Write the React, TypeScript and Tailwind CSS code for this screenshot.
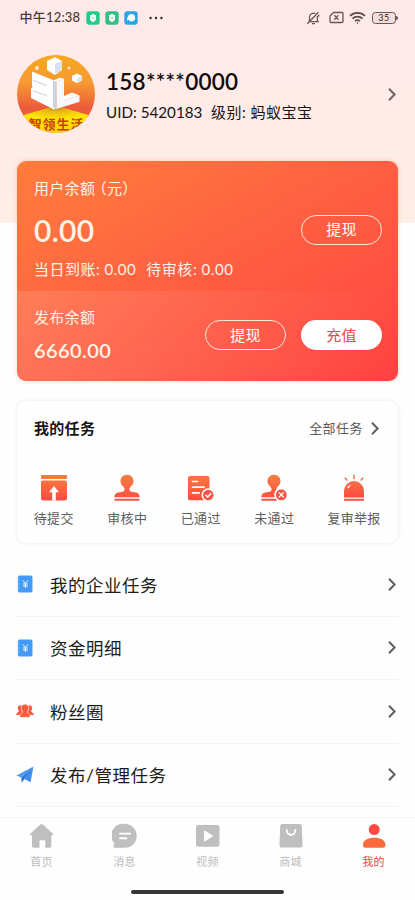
import React from "react";

type IconProps = { className?: string };

const Chevron = ({ className = "" }: IconProps) => (
  <svg viewBox="0 0 8 13" className={`h-[13px] w-2 shrink-0 ${className}`} fill="none" stroke="currentColor" strokeWidth="2">
    <path d="M1 .8 6.6 6.5 1 12.2" />
  </svg>
);

const SubmitIcon = () => (
  <svg viewBox="0 0 28 28" className="size-7">
    <rect x="1" y="1" width="26" height="4" rx="1" fill="#ee7d40" />
    <linearGradient id="sub" x1="0" y1="0" x2="0" y2="1">
      <stop stopColor="#f9733e" />
      <stop offset="1" stopColor="#fc4b43" />
    </linearGradient>
    <path d="M3 6.500h22a2 2 0 0 1 2 2V24a2.500 2.500 0 0 1-2.500 2.500h-21A2.500 2.500 0 0 1 1 24V8.500a2 2 0 0 1 2-2Z" fill="url(#sub)" />
    <path d="m14 12 5 6.300h-3.200v8.200h-3.600v-8.200H9Z" fill="#fff" />
  </svg>
);

const stampBody =
  "M14 .8c-4 0-6.500 2.900-6.500 6.400 0 3.300 2.500 4.800 3.500 6.200.9 1.400.7 3-.4 3.800-1 .8-3.400.8-5.600 1.300-2.200.5-3.700 2.100-3.700 4.700h25.400c0-2.600-1.500-4.200-3.700-4.700-2.200-.5-4.600-.5-5.600-1.300-1.100-.8-1.300-2.400-.4-3.800 1-1.400 3.500-2.900 3.500-6.200C20.500 3.700 18 .8 14 .8Z";

const StampIcon = () => (
  <svg viewBox="0 0 28 28" className="size-7">
    <linearGradient id="stamp" gradientUnits="userSpaceOnUse" x1="0" y1="0" x2="0" y2="27">
      <stop stopColor="#f4813f" />
      <stop offset="1" stopColor="#fc4b43" />
    </linearGradient>
    <path d={stampBody} fill="url(#stamp)" />
    <rect x="1.500" y="24.800" width="25" height="1.900" rx=".6" fill="#f45045" />
  </svg>
);

const PassedIcon = () => (
  <svg viewBox="0 0 28 28" className="size-7">
    <linearGradient id="pass" gradientUnits="userSpaceOnUse" x1="0" y1="0" x2="0" y2="27">
      <stop stopColor="#fa793d" />
      <stop offset="1" stopColor="#fc4b43" />
    </linearGradient>
    <rect x="1" y="2" width="21.500" height="24.200" rx="1.800" fill="url(#pass)" />
    <path d="M4.800 7.500h6.600M4.800 13.200h12.800M4.800 18.800h8" stroke="#fff" strokeWidth="1.700" />
    <circle cx="21.300" cy="21" r="6.800" fill="#fff" />
    <circle cx="21.300" cy="21" r="5.300" fill="#f4574a" />
    <path d="m18.500 21 2.200 2 3.600-3.700" stroke="#fff" strokeWidth="1.500" fill="none" />
  </svg>
);

const RejectedIcon = () => (
  <svg viewBox="0 0 28 28" className="size-7">
    <path d={stampBody} fill="url(#stamp)" />
    <rect x="1.300" y="24.800" width="16" height="1.900" rx=".6" fill="#f45045" />
    <circle cx="21.300" cy="20.800" r="7.100" fill="#fefefe" />
    <circle cx="21.300" cy="20.800" r="5.500" fill="#f4574a" />
    <path d="m18.900 18.400 4.800 4.800m0-4.800-4.800 4.800" stroke="#fff" strokeWidth="1.300" />
  </svg>
);

const AlarmIcon = () => (
  <svg viewBox="0 0 28 28" className="size-7">
    <linearGradient id="alarm" x1="0" y1="0" x2="0" y2="1">
      <stop stopColor="#fa6f40" />
      <stop offset="1" stopColor="#fc4b43" />
    </linearGradient>
    <path d="M4 23.500V17a10 10 0 0 1 20 0v6.500Z" fill="url(#alarm)" />
    <rect x="4" y="24.700" width="20" height="2" rx=".5" fill="#f4524a" />
    <path d="M14 .8v4.400M4.800 3.800l2.500 2.700M23.200 3.800l-2.500 2.700" stroke="#f07448" strokeWidth="1.500" />
    <path d="M8 13.600c.4-.9.900-1.400 1.700-1.800" stroke="#fff" strokeWidth="1.500" fill="none" strokeLinecap="round" />
  </svg>
);

const LedgerIcon = () => (
  <svg viewBox="0 0 18 18" className="size-[18px]">
    <rect x="1.900" y=".6" width="14.600" height="17" rx="1.800" fill="#429bf8" />
    <path d="M1 5h2.200M1 9h2.200M1 13h2.200" stroke="#b7dcff" strokeWidth="1" />
    <path d="m6.900 5.500 2.500 3 2.500-3M9.400 8.500v4.600M6.900 9h5M6.900 11h5" stroke="#f2f9ff" strokeWidth="1" fill="none" />
  </svg>
);

const FansIcon = () => (
  <svg viewBox="0 0 18 18" className="size-[18px]" fill="#fb5a3d">
    <path d="M4.600 3.200c-2 0-3 1.500-2.800 3.200.1 1.100.6 1.900 1.200 2.500-.1 1.200-2.400 1.500-2.800 3.200-.1.600.3 1 .9 1h3.100c.5-1.300 1.600-2 2.500-2.500C5 8.700 4.400 5.500 5.900 3.500Z" />
    <path d="M13.400 3.200c2 0 3 1.500 2.800 3.200-.1 1.100-.6 1.900-1.200 2.500.1 1.200 2.400 1.500 2.800 3.200.1.600-.3 1-.9 1h-3.100c-.5-1.300-1.600-2-2.500-2.500 1.700-1.900 2.300-5.100.8-7.100Z" />
    <path d="M9 2.300c-2.400 0-3.900 1.700-3.700 4.100.1 1.500.7 2.600 1.500 3.400.3 1.200-2.500 1.600-2.900 3.700-.2 1 .4 1.800 1.300 1.800h7.600c.9 0 1.500-.8 1.300-1.800-.4-2.100-3.200-2.500-2.900-3.700.8-.8 1.400-1.900 1.500-3.400.2-2.400-1.300-4.100-3.700-4.100Z" stroke="#fff" strokeWidth=".4" />
  </svg>
);

const PlaneIcon = () => (
  <svg viewBox="0 0 18 18" className="size-[18px]">
    <path d="M17.400.6.4 9.500l4.900 2Z" fill="#4b9bf0" />
    <path d="M17.400.6 5.300 11.500l.4 5.300 2.600-3.500Z" fill="#2f73cf" />
    <path d="M17.400.6 7.300 12.400l7.300 3.900Z" fill="#408df0" />
  </svg>
);

const HomeIcon = () => (
  <svg viewBox="0 0 26 26" className="size-[26px]" fill="#bfbfbf">
    <path d="M11.400 1.400a2 2 0 0 1 2.500 0l9.900 9c.8.700.3 1.900-.7 1.900h-.8V23c0 1-.7 1.700-1.700 1.700h-4.300v-6c0-.9-.5-1.400-1.400-1.400h-3c-.9 0-1.400.5-1.400 1.400v6H4.700c-1 0-1.700-.7-1.700-1.700V12.300h-.8c-1 0-1.500-1.200-.7-1.900Z" />
  </svg>
);

const MessageIcon = () => (
  <svg viewBox="0 0 26 26" className="size-[26px]">
    <path d="M13 1a11.700 11.700 0 0 1 11.700 11.800A11.700 11.700 0 0 1 13 24.700H2.600c-.9 0-1.300-.6-1-1.400l.7-3A11.700 11.700 0 0 1 13 1Z" fill="#bfbfbf" />
    <path d="M8 10.600h10.200M8 15.300h6.300" stroke="#fff" strokeWidth="1.900" strokeLinecap="round" />
  </svg>
);

const VideoIcon = () => (
  <svg viewBox="0 0 26 26" className="size-[26px]">
    <rect x="1" y="2" width="23.500" height="21.700" rx="2.600" fill="#bfbfbf" />
    <path d="M9.500 7.800v10.400l8.300-5.200Z" fill="#fff" stroke="#fff" strokeWidth=".8" strokeLinejoin="round" />
  </svg>
);

const ShopIcon = () => (
  <svg viewBox="0 0 26 26" className="size-[26px]">
    <path d="M4.600 1h16.800c1.300 0 2.300.9 2.400 2.200l.7 18.800c.1 1.500-.9 2.600-2.400 2.600H3.900c-1.500 0-2.500-1.100-2.400-2.600l.7-18.800C2.300 1.900 3.300 1 4.600 1Z" fill="#bfbfbf" />
    <path d="M8.700 7c0 2.700 1.700 4.800 4.300 4.800s4.300-2.100 4.300-4.800" stroke="#fff" strokeWidth="1.900" strokeLinecap="round" fill="none" />
  </svg>
);

const MeIcon = () => (
  <svg viewBox="0 0 26 26" className="size-[26px]">
    <circle cx="13.200" cy="6.600" r="5.500" fill="#fb4b44" />
    <path d="M13.200 14.700c6.300 0 11.200 2.300 11.200 7 0 2-.7 3-2.300 3H4.300c-1.600 0-2.300-1-2.300-3 0-4.700 4.900-7 11.200-7Z" fill="#fd6b3d" />
  </svg>
);

const StatusBar = () => (
  <div className="flex h-[35px] items-center pl-[19.500px] pr-[17px] text-[#493b3b]">
    <span className="w-[61px] whitespace-nowrap text-[13px] font-medium tracking-[0.2px]">中午12:38</span>
    <div className="ml-[5.500px] flex gap-[5px]">
      {["#23ca8b", "#35bf88"].map((c) => (
        <svg key={c} viewBox="0 0 14 14" className="size-[14px]">
          <rect x=".3" y=".3" width="13.400" height="13.400" rx="3" fill={c} />
          <path d="M7 3 10 4.200v3c0 2-1.300 3.200-3 4-1.700-.8-3-2-3-4v-3Z" fill="#fff" />
          <path d="m6 6.500 1 1.100 1-1.300" stroke={c} fill="none" />
        </svg>
      ))}
      <svg viewBox="0 0 14 14" className="size-[14px]">
        <rect x=".3" y=".3" width="13.400" height="13.400" rx="3" fill="#2aa4e4" />
        <path d="M7.600 3a3.700 3.700 0 1 1-3.500 5.300L3.500 10.500C2.500 6.500 4.500 3 7.600 3Z" fill="#fff" />
      </svg>
    </div>
    <svg viewBox="0 0 14 4" className="ml-[11px] h-1 w-[14px]" fill="#342929">
      <circle cx="1.600" cy="2" r="1.200" /><circle cx="7" cy="2" r="1.200" /><circle cx="12.400" cy="2" r="1.200" />
    </svg>
    <div className="ml-auto flex items-center">
      <svg viewBox="0 0 15 14" className="h-[14px] w-[15px]" fill="none" stroke="#685656" strokeWidth="1.300">
        <path d="M3.500 10.500V6.200A3.900 3.900 0 0 1 9.300 2.700M11.400 5v5.500M2.400 10.700h10.500M6 12.700h3M1.300 12.700 12.500 1.200M12 4.500l1.500.4" />
      </svg>
      <svg viewBox="0 0 15 13" className="ml-[8px] h-[13px] w-[15px]" fill="none" stroke="#685656" strokeWidth="1.300">
        <path d="M4.500 1.500H13q1 0 1 1v8q0 1-1 1H2q-1 0-1-1V5ZM5.300 4.300l4.200 4.400M9.500 4.300 5.300 8.700" />
      </svg>
      <svg viewBox="0 0 17 14" className="ml-[5px] h-[14px] w-[17px]" fill="none" stroke="#5d4b4b" strokeWidth="1.700">
        <path d="M1 5a10.800 10.800 0 0 1 15 0M3.500 7.600a7.200 7.200 0 0 1 10 0M6 10.200a3.700 3.700 0 0 1 5 0" />
        <circle cx="8.500" cy="12" r=".8" fill="#5d4b4b" stroke="none" />
      </svg>
      <div className="ml-[6px] flex h-[12px] w-[24px] items-center justify-center rounded-[3.500px] border-[1.500px] border-[#685656] bg-[#f4dedd] text-[9px] font-medium leading-none tracking-[0.5px]">35</div>
      <div className="h-1 w-[2px] rounded-r bg-[#685656]" />
    </div>
  </div>
);

const Avatar = () => (
  <svg viewBox="0 0 78 78" className="size-[78px] shrink-0">
    <defs>
      <linearGradient id="sky" x1="0" y1="0" x2="0" y2="1">
        <stop stopColor="#f6a720" /><stop offset=".35" stopColor="#f79a32" /><stop offset=".68" stopColor="#ec5b3a" />
      </linearGradient>
      <radialGradient id="floor" cx=".5" cy="0" r=".8">
        <stop stopColor="#b37a1c" /><stop offset=".22" stopColor="#e9b817" /><stop offset=".6" stopColor="#ffe800" /><stop offset="1" stopColor="#fdd80a" />
      </radialGradient>
      <clipPath id="disc"><circle cx="39" cy="39" r="39" /></clipPath>
    </defs>
    <g clipPath="url(#disc)">
      <rect width="78" height="78" fill="url(#sky)" />
      <path d="M0 62 34 52h10l34 10v16H0Z" fill="url(#floor)" />
      <path d="m30 6 8-4 7 4v9l-7 5-8-5Z" fill="#fff" /><path d="m38 9 7-3v9l-7 5Z" fill="#dce2e8" />
      <path d="m55 21 5-2.500 5 2.500v4.500L60 28l-5-2.500Z" fill="#fff" /><path d="m60 23 5-2v4.500L60 28Z" fill="#dde4ee" />
      <circle cx="20" cy="13" r="2" fill="#ffe5c5" /><circle cx="52" cy="13" r="1.500" fill="#ffe5c5" />
      <path d="m15 16.500 21 8.500 2 2v28L14 43V33l2-1-1-1Z" fill="#fff" />
      <path d="m36 25.500 3.500 1V54l-3.500-1.500Z" fill="#cbd5e1" />
      <path d="m39.500 26.500 7.500-2.700v21.700l15.500-5v6.200L39.500 54Z" fill="#f6f8fc" />
      <path d="m36 25.500 7-2.700 4 1-7.500 2.700ZM47 41l8-3.500 7.500 3-15.500 5Z" fill="#fff" />
      <path d="m16 24.500 14 5.500v1.600l-14-5.500ZM16 35l14 5v1.600l-14-5Z" fill="#d7dde4" />
      <text x="39.500" y="74" textAnchor="middle" fontSize="13" fontWeight="700" letterSpacing=".9" fill="#c8400f">智领生活</text>
    </g>
  </svg>
);

const Pill = ({ children, solid = false }: { children: string; solid?: boolean }) => (
  <button className={`flex h-[30px] w-[81px] items-center justify-center rounded-full text-[15px] tracking-[0.3px] ${solid ? "bg-white text-[#e94b45]" : "border-[1.500px] border-[#ffe7dc] text-white"}`}>
    {children}
  </button>
);

const tasks = [
  { label: "待提交", icon: <SubmitIcon /> },
  { label: "审核中", icon: <StampIcon /> },
  { label: "已通过", icon: <PassedIcon /> },
  { label: "未通过", icon: <RejectedIcon /> },
  { label: "复审举报", icon: <AlarmIcon /> },
];

const menu = [
  { label: "我的企业任务", icon: <LedgerIcon /> },
  { label: "资金明细", icon: <LedgerIcon /> },
  { label: "粉丝圈", icon: <FansIcon /> },
  { label: "发布/管理任务", icon: <PlaneIcon /> },
];

const tabs = [
  { label: "首页", icon: <HomeIcon /> },
  { label: "消息", icon: <MessageIcon /> },
  { label: "视频", icon: <VideoIcon /> },
  { label: "商城", icon: <ShopIcon /> },
  { label: "我的", icon: <MeIcon />, active: true },
];

export default function App() {
  return (
    <div className="flex h-[900px] w-[415px] flex-col overflow-hidden bg-[#fefefe] font-['Lato','Noto_Sans_CJK_SC',sans-serif]">
      <div className="h-[223px] shrink-0 bg-linear-to-b from-[#ffe9e9] to-[#feeee6]">
        <StatusBar />
        <header className="mt-5 flex h-[78px] items-center pl-[17px] pr-[19px]">
          <Avatar />
          <div className="ml-[11px] whitespace-nowrap pt-[3px] text-[#1b1212]">
            <p className="h-[30px] text-[22.500px] font-semibold leading-[30px] tracking-[0.25px] text-[#120b0b]">158****0000</p>
            <div className="mt-[3px] flex h-6 items-center text-[15px]">
              <span className="w-[105px] text-[15.200px]">UID: 5420183</span>
              <span className="tracking-[0.500px]">级别: 蚂蚁宝宝</span>
            </div>
          </div>
          <Chevron className="ml-auto text-[#74605f]" />
        </header>
      </div>

      <section className="mx-[17px] -mt-[62px] h-[220px] shrink-0 overflow-hidden rounded-[9px] bg-linear-to-br from-[#ff7d3c] via-[#ff5f42] to-[#ff4141] text-[15px] text-[#fff3e8] shadow-[0_0_4px_rgba(255,80,60,0.3)]">
        <div className="flex h-[130px] items-start justify-between pl-[17px] pr-4 pt-4">
          <div>
            <p className="flex h-[22px] gap-1 whitespace-nowrap leading-[22px] tracking-[0.3px]">
              <span>用户余额</span>
              <span className="[font-feature-settings:'halt']">（元）</span>
            </p>
            <p className="mt-[13px] h-9 text-[30px] font-semibold leading-9 tracking-[0.3px]">0.00</p>
            <p className="mt-[10px] flex h-[22px] gap-[10px] whitespace-nowrap leading-[22px]">
              <span className="tracking-[0.5px]">当日到账: 0.00</span><span className="tracking-[0.550px]">待审核: 0.00</span>
            </p>
          </div>
          <div className="pt-[37.500px]"><Pill>提现</Pill></div>
        </div>
        <div className="flex h-[90px] items-start justify-between bg-linear-to-r from-white/12 to-white/0 pl-[17px] pr-4 pt-[15px]">
          <div>
            <p className="h-[22px] leading-[22px] tracking-[0.3px]">发布余额</p>
            <p className="mt-[10px] h-6 text-[20px] font-semibold leading-6 tracking-[0.4px]">6660.00</p>
          </div>
          <div className="flex gap-[15px] pt-[14px]"><Pill>提现</Pill><Pill solid>充值</Pill></div>
        </div>
      </section>

      <section className="mx-[17px] mt-5 h-[142px] shrink-0 rounded-[9px] bg-[#fefefe] shadow-[0_0_5px_rgba(0,0,0,0.09)]">
        <div className="flex h-[54px] items-center justify-between pl-[17px] pr-[19.500px]">
          <h2 className="pt-px text-[15px] font-bold tracking-[0.3px] text-[#161616]">我的任务</h2>
          <div className="flex items-center gap-[8px] text-[13px] tracking-[0.3px] text-[#5a5a5a]"><span className="pt-px">全部任务</span><Chevron className="text-[#5f5f5f]" /></div>
        </div>
        <div className="flex pt-[19px]">
          {tasks.map((t) => (
            <div key={t.label} className="flex w-[73.500px] flex-col items-center last:w-[86px]">
              {t.icon}
              <span className="mt-[6px] h-5 text-[13px] leading-5 tracking-[0.3px] text-[#606060]">{t.label}</span>
            </div>
          ))}
        </div>
      </section>

      <nav className="mx-4 mt-[10px] shrink-0">
        {menu.map((m) => (
          <div key={m.label} className="flex h-[63.500px] items-center border-b border-[#f3f3f3] pr-[3px]">
            {m.icon}
            <span className="ml-4 pt-[3px] text-[17.500px] tracking-[0.5px] text-[#1c1c1c]">{m.label}</span>
            <Chevron className="ml-auto text-[#5f5f5f]" />
          </div>
        ))}
      </nav>

      <footer className="mt-auto flex h-[83px] shrink-0 flex-col items-center border-t border-[#f5f5f5] pt-[5px]">
        <div className="flex w-full">
          {tabs.map((t) => (
            <div key={t.label} className={`flex flex-1 flex-col items-center text-[11px] ${t.active ? "text-[#ee4949]" : "text-[#bdbdbd]"}`}>
              {t.icon}
              <span className="mt-[5px] h-4 leading-4 tracking-[0.3px]">{t.label}</span>
            </div>
          ))}
        </div>
        <div className="mt-5 h-1 w-[153px] rounded-full bg-[#353535]" />
      </footer>
    </div>
  );
}
